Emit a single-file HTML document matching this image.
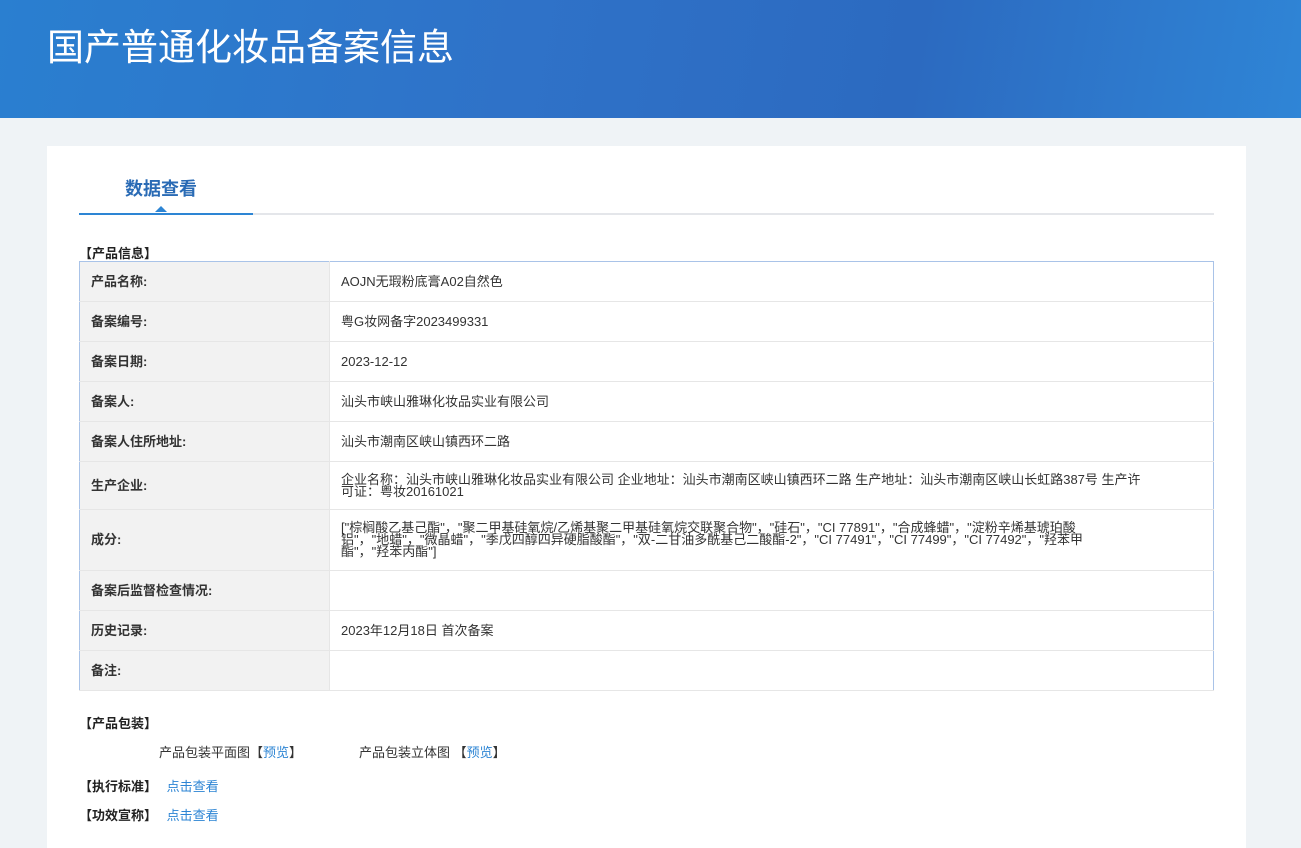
<!DOCTYPE html><html><head><meta charset="utf-8"><style>
*{margin:0;padding:0;box-sizing:border-box}
body{width:1301px;height:848px;overflow:hidden;background:#eff3f6;font-family:"Liberation Sans","Noto Sans CJK SC",sans-serif;font-size:13px;color:#333}
.hd{height:118px;background:linear-gradient(100deg,#2a7fd0 0%,#2f72c8 40%,#2c6ac0 70%,#2f85d6 100%);position:relative;overflow:hidden}
.hd h1{position:absolute;left:47px;top:17px;font-size:37px;font-weight:normal;color:#fff;letter-spacing:0}
.card{position:absolute;left:47px;top:146px;width:1199px;height:702px;background:#fff}
.tab{position:absolute;left:78px;top:29px;font-size:18px;font-weight:bold;color:#2a6bb5}
.line{position:absolute;left:32px;top:67px;width:1135px;height:2px;background:#e4e6ea}
.line i{position:absolute;left:0;top:0;width:174px;height:2px;background:#2d85d4}
.line b{position:absolute;left:76px;top:-7px;border:6px solid transparent;border-bottom-color:#2d85d4;border-top:0;width:0;height:0}
.sec{position:absolute;left:32px;font-weight:bold;color:#222}
table{position:absolute;left:32px;top:115px;width:1135px;border-collapse:collapse;border:1px solid #a9c3e8}
td{border-bottom:1px solid #e6e6e6;height:40px;padding:0 11px;vertical-align:middle;line-height:12px}
td.l{width:250px;background:#f2f2f2;font-weight:bold;color:#333;border-right:1px solid #e6e6e6}
a{color:#2d85d4;text-decoration:none}
</style></head><body>
<div class="hd"><h1>国产普通化妆品备案信息</h1></div>
<div class="card">
<div class="tab">数据查看</div>
<div class="line"><i></i><b></b></div>
<div class="sec" style="top:97px">【产品信息】</div>
<table>
<tr><td class="l">产品名称:</td><td>AOJN无瑕粉底膏A02自然色</td></tr>
<tr><td class="l">备案编号:</td><td>粤G妆网备字2023499331</td></tr>
<tr><td class="l">备案日期:</td><td>2023-12-12</td></tr>
<tr><td class="l">备案人:</td><td>汕头市峡山雅琳化妆品实业有限公司</td></tr>
<tr><td class="l">备案人住所地址:</td><td>汕头市潮南区峡山镇西环二路</td></tr>
<tr><td class="l" style="height:48px">生产企业:</td><td style="padding-right:62px">企业名称：汕头市峡山雅琳化妆品实业有限公司 企业地址：汕头市潮南区峡山镇西环二路 生产地址：汕头市潮南区峡山长虹路387号 生产许可证：粤妆20161021</td></tr>
<tr><td class="l" style="height:61px">成分:</td><td style="padding-right:90px">["棕榈酸乙基己酯"，"聚二甲基硅氧烷/乙烯基聚二甲基硅氧烷交联聚合物"，"硅石"，"CI 77891"，"合成蜂蜡"，"淀粉辛烯基琥珀酸铝"，"地蜡"，"微晶蜡"，"季戊四醇四异硬脂酸酯"，"双-二甘油多酰基己二酸酯-2"，"CI 77491"，"CI 77499"，"CI 77492"，"羟苯甲酯"，"羟苯丙酯"]</td></tr>
<tr><td class="l">备案后监督检查情况:</td><td></td></tr>
<tr><td class="l">历史记录:</td><td>2023年12月18日 首次备案</td></tr>
<tr><td class="l">备注:</td><td></td></tr>
</table>
<div class="sec" style="top:567px">【产品包装】</div>
<div style="position:absolute;left:112px;top:596px">产品包装平面图【<a>预览</a>】</div>
<div style="position:absolute;left:312px;top:596px">产品包装立体图 【<a>预览</a>】</div>
<div class="sec" style="top:630px">【执行标准】 <a style="font-weight:normal;margin-left:6px">点击查看</a></div>
<div class="sec" style="top:659px">【功效宣称】 <a style="font-weight:normal;margin-left:6px">点击查看</a></div>
</div>
</body></html>
